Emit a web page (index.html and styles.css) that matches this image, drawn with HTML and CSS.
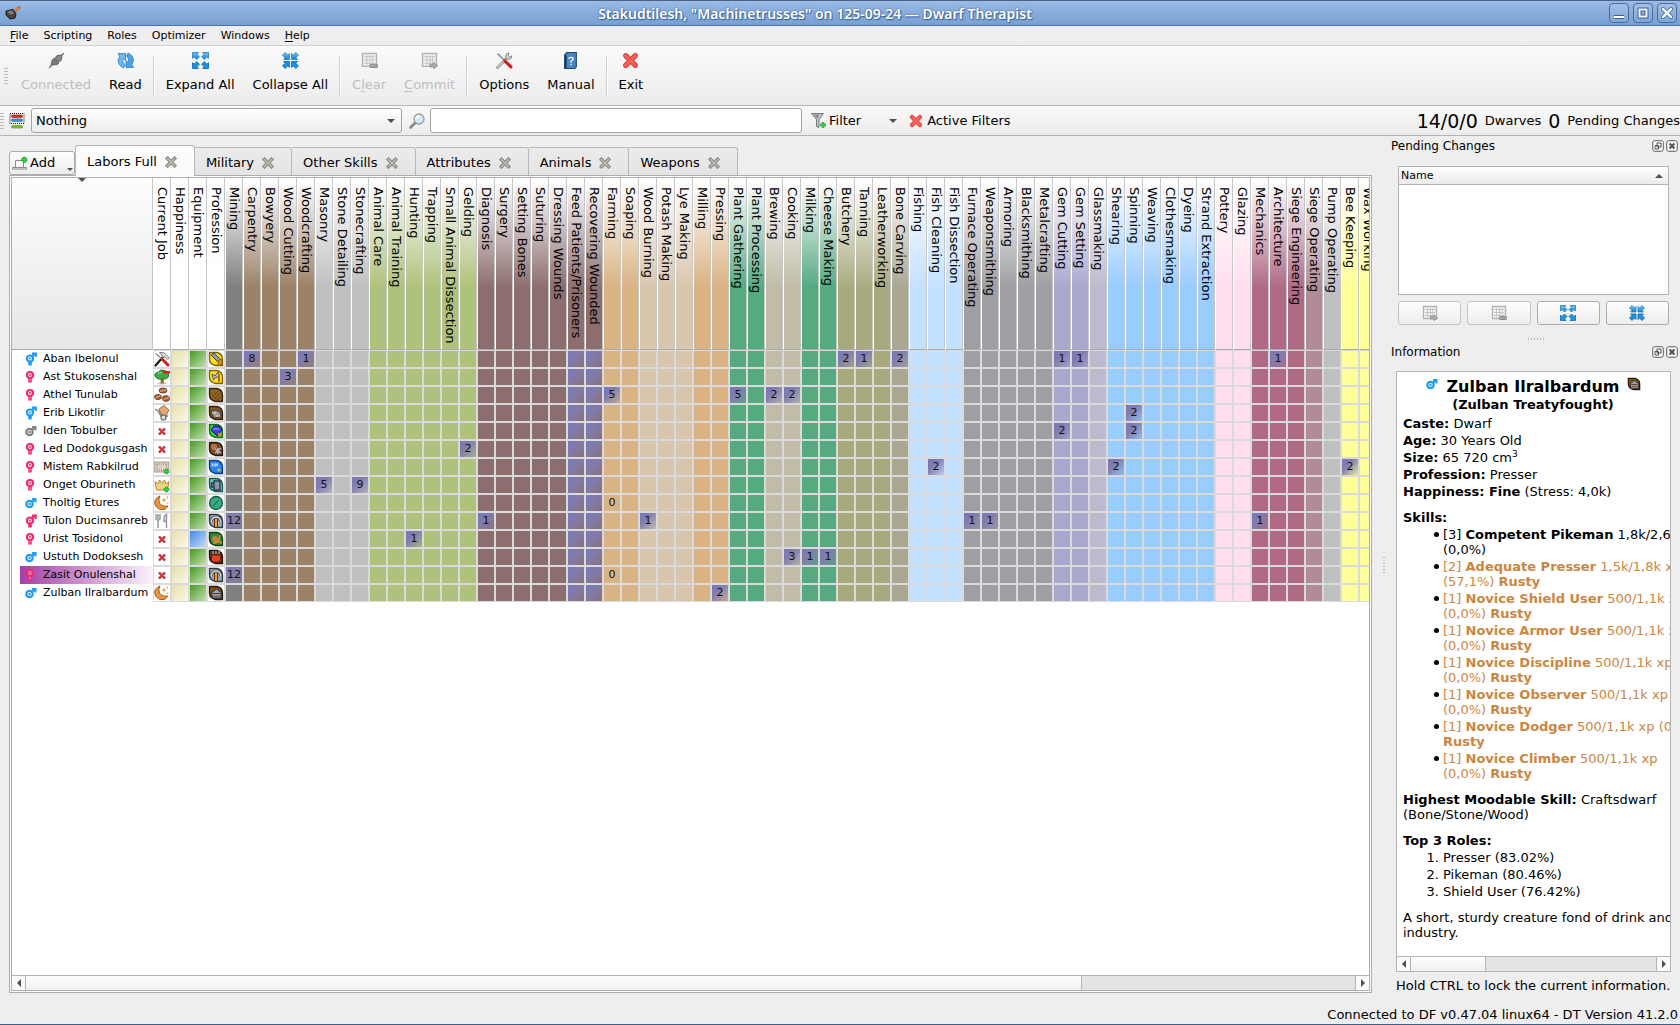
FILE: index.html
```html
<!DOCTYPE html>
<html lang="en">
<head>
<meta charset="utf-8">
<title>Dwarf Therapist</title>
<link rel="stylesheet" href="styles.css">
</head>
<body>
<svg class="defs" aria-hidden="true">
  <defs>
    <linearGradient id="blue" x1="0" y1="0" x2="0" y2="1"><stop offset="0" stop-color="#7cc4f2"/><stop offset="1" stop-color="#0d84d6"/></linearGradient>
    <symbol id="i-hammer" viewBox="0 0 16 14"><path d="M8 7 14 1.500" stroke="#a85c10" stroke-width="2.600" stroke-linecap="round"/><path d="M8 6.500 14 1.500" stroke="#f0a040" stroke-width="1.200"/><path d="M1 5 8 3.500 11 8 10 12 5 13 1 9z" fill="#4a4440" stroke="#1e1a18"/><path d="M2 5.500 7 4.500 9 7.500 5 8.500z" fill="#84807a"/></symbol>
    <symbol id="i-plug" viewBox="0 0 16 16"><path d="M1 15 4 12M12 4l3-3" stroke="#808080" stroke-width="1.500"/><path d="M3 12 4 7.500 6 6 7.500 7.500 9 9 10 10.500 8 12z" fill="#7c7c7c" stroke="#686868"/><path d="M7 5.500 8.500 3.500 12.500 3 13 4 12.500 7.500 10.500 9z" fill="#8c8c8c" stroke="#686868"/></symbol>
    <symbol id="i-read" viewBox="0 0 16 16"><path d="M1 1.500h7v6.500L6 6Q4 9 7.500 12.500L6 15Q-1.500 11 2.500 4z" fill="#6cb8f0" stroke="#2a80c8" stroke-width=".8"/><path d="M15.500 14.500H8.500V8l2 2Q12 7 9 3.500L10.500 1q7.500 4 3.500 11z" fill="#4ca4e4" stroke="#2a80c8" stroke-width=".8"/></symbol>
    <symbol id="i-expand" viewBox="0 0 16 16"><g fill="url(#blue)" stroke="#1f7fc0" stroke-width=".8"><path d="M.5 6V.5H6L4.500 2 7 4.500 4.500 7 2 4.500z"/><path d="M15.500 6V.5H10L11.500 2 9 4.500 11.500 7 14 4.500z"/></g><g fill="#1c94e4" stroke="#0868b0" stroke-width=".8"><path d="M.5 10v5.500H6L4.500 14 7 11.500 4.500 9 2 11.500z"/><path d="M15.500 10v5.500H10l1.500-1.500L9 11.500 11.500 9 14 11.500z"/></g></symbol>
    <symbol id="i-collapse" viewBox="0 0 16 16"><g fill="url(#blue)" stroke="#1f7fc0" stroke-width=".8"><path d="M7 1.500V7H1.500L3 5.500.5 3 3 .5 5.500 3z"/><path d="M9 1.500V7h5.500L13 5.500 15.500 3 13 .5 10.500 3z"/></g><g fill="#1c94e4" stroke="#0868b0" stroke-width=".8"><path d="M7 14.500V9H1.500L3 10.500.5 13 3 15.500 5.500 13z"/><path d="M9 14.500V9h5.500L13 10.500l2.500 2.500L13 15.500 10.500 13z"/></g></symbol>
    <symbol id="i-clear" viewBox="0 0 16 16"><path d="M1.500 1.500h13v12h-13z" fill="#f4f4f4" stroke="#b4b4b4" stroke-width="1.400"/><path d="M3 4.500h10M3 7.500h10M3 10.500h10M5.500 3v9M8.500 3v9M11 3v9" stroke="#c4c4c4"/><rect x="8.500" y="11.500" width="7" height="3" rx="1" fill="#a8a8a8" stroke="#888"/></symbol>
    <symbol id="i-commit" viewBox="0 0 16 16"><path d="M1.500 1.500h13v12h-13z" fill="#f4f4f4" stroke="#b4b4b4" stroke-width="1.400"/><path d="M3 4.500h10M3 7.500h10M3 10.500h10M5.500 3v9M8.500 3v9M11 3v9" stroke="#c4c4c4"/><path d="M8.500 11.500h3.500v-1.500l3.500 3-3.500 2.500V14H8.500z" fill="#b0b0b0" stroke="#888" stroke-width=".8"/></symbol>
    <symbol id="i-tools" viewBox="0 0 16 16"><path d="M1.500 14.500 11 5" stroke="#8c8c8c" stroke-width="2.600" stroke-linecap="round"/><path d="M1.500 14.500 11 5" stroke="#e0e0e0"/><path d="M10 1.500 12.500 1 11.500 3l1.500 1.500 2-1Q15 6.500 12 7 9 7 9 4.500z" fill="#d0d0d0" stroke="#808080" stroke-width=".8"/><path d="M1.500 1.500 8 8" stroke="#909090" stroke-width="1.600"/><path d="M8.500 8.500 14 14" stroke="#d02020" stroke-width="3" stroke-linecap="round"/></symbol>
    <symbol id="j-hammer" viewBox="0 0 16 16"><path d="M1.500 14.500 9 6" stroke="#1c1c1c" stroke-width="2.200" stroke-linecap="round"/><path d="M5.500 1.500Q10 .5 12 3.500L15.500 7 13.500 8.500 11 6 8.500 6.500 8 4z" fill="#d8d8d8" stroke="#707070" stroke-width=".8"/><path d="M1.500 2.500 8 8" stroke="#909090" stroke-width="1.600"/><path d="M8.500 8.500 14 14" stroke="#d82020" stroke-width="3" stroke-linecap="round"/></symbol>
    <symbol id="i-manual" viewBox="0 0 12 16"><path d="M.5 2.500 2.500.5h9V14L10 15.500H.5z" fill="#4a86c4" stroke="#1c4474"/><path d="M1.500 3v12" stroke="#16304e" stroke-width="1.500"/><path d="M4.500 6.500Q4.500 5 6.500 5T8.500 6.500Q8.500 7.500 6.500 8.500V10M6.500 11v1.500" fill="none" stroke="#fff" stroke-width="1.200"/></symbol>
    <symbol id="i-x" viewBox="0 0 14 14"><path d="M3 3 11 11M11 3 3 11" stroke="#d83030" stroke-width="4.200" stroke-linecap="round"/><path d="M3 3 11 11M11 3 3 11" stroke="#ff6058" stroke-width="2.800" stroke-linecap="round"/></symbol>
    <symbol id="i-close" viewBox="0 0 12 12"><path d="M2.500 2.500 9.500 9.500M9.500 2.500 2.500 9.500" stroke="#82827c" stroke-width="3.600" stroke-linecap="square"/><path d="M2.500 2.500 9.500 9.500M9.500 2.500 2.500 9.500" stroke="#b8b8b0" stroke-width="1.800" stroke-linecap="square"/></symbol>
    <symbol id="i-group" viewBox="0 0 16 16"><rect x="1" y=".5" width="14" height="10" fill="none" stroke="#111" stroke-dasharray="1 1"/><rect x="2.500" y="2" width="11" height="2.500" rx="1" fill="#e02c2c" stroke="#a01414" stroke-width=".6"/><rect x="2.500" y="6" width="11" height="2.500" rx="1" fill="#2c9ce0" stroke="#1468a0" stroke-width=".6"/><rect x="2.500" y="12.500" width="11" height="2.500" rx="1" fill="#7cc82c" stroke="#4c8c10" stroke-width=".6"/></symbol>
    <symbol id="i-search" viewBox="0 0 16 16"><path d="M1.500 14.500 6 10" stroke="#888" stroke-width="2.600" stroke-linecap="round"/><circle cx="10" cy="6" r="5" fill="#d6e8f6" stroke="#9a9a9a" stroke-width="1.300"/><path d="M7 6Q7.500 3 10.500 3" fill="none" stroke="#fff" stroke-width="1.500"/></symbol>
    <symbol id="i-plus" viewBox="0 0 8 8"><path d="M4 .8v6.400M.8 4h6.400" stroke="#108c20" stroke-width="3"/><path d="M4 1.200v5.600M1.200 4h5.600" stroke="#38dc48" stroke-width="1.500"/></symbol>
    <symbol id="i-filter" viewBox="0 0 16 16"><path d="M.5.500h12L8 6.500v8l-2.500-1v-7z" fill="#c4c4c8" stroke="#78787c"/><path d="M3 1.500h5L6.500 6z" fill="#86868c"/><use href="#i-plus" x="8.500" y="8.500" width="7" height="7"/></symbol>
    <symbol id="i-add" viewBox="0 0 16 16"><path d="M3.500 5.500h8v7h-8zM.5 12.500h14v1.500H.5z" fill="#f6f6f6" stroke="#8c8c8c"/><use href="#i-plus" x="8.500" y="1" width="7.500" height="7.500"/></symbol>
    <symbol id="i-float" viewBox="0 0 12 12"><rect x=".7" y=".7" width="10.600" height="10.600" rx="2" fill="#f8f8f8" stroke="#606060"/><path d="M5 3h4v4H5zM3 5.500h3.500V9H3z" fill="#fff" stroke="#505050"/></symbol>
    <symbol id="i-dockx" viewBox="0 0 12 12"><rect x=".7" y=".7" width="10.600" height="10.600" rx="2" fill="#f8f8f8" stroke="#606060"/><path d="M3.500 3.500 8.500 8.500M8.500 3.500 3.500 8.500" stroke="#555" stroke-width="2.200"/></symbol>
    <symbol id="s-male" viewBox="0 0 12 14"><path d="M7 6 9.500 3.500M7 3h3.500v3.500" fill="none" stroke="currentColor" stroke-width="2"/><circle cx="4.500" cy="8" r="3.200" fill="#fff" fill-opacity=".6" stroke="currentColor" stroke-width="2.200"/><circle cx="4.500" cy="8" r="1.200" fill="currentColor"/></symbol>
    <symbol id="s-female" viewBox="0 0 12 14"><circle cx="5" cy="5" r="3" fill="#fff" fill-opacity=".5" stroke="currentColor" stroke-width="2.200"/><circle cx="5" cy="5" r="1" fill="currentColor"/><path d="M5 8v4.500" stroke="currentColor" stroke-width="3.600"/><path d="M5 9v2.500" stroke="#fff" stroke-opacity=".5"/></symbol>
    <symbol id="s-both" viewBox="0 0 12 14"><path d="M7 4.500 9.500 2M7 1.500h3.800v3.500" fill="none" stroke="currentColor" stroke-width="2"/><circle cx="5" cy="6.500" r="3" fill="#fff" fill-opacity=".5" stroke="currentColor" stroke-width="2.200"/><circle cx="5" cy="6.500" r="1" fill="currentColor"/><path d="M5 9v4.500" stroke="currentColor" stroke-width="3.600"/></symbol>
    <symbol id="j-tree" viewBox="0 0 16 16"><ellipse cx="8" cy="14.500" rx="5" ry="1" fill="#c8c8c8"/><path d="M7 8h2.500l.5 6.500H6.500z" fill="#a06a28"/><path d="M1 7Q0 4 4 3.500 6-.5 10 1.500 15 2 14.500 7 14 10.500 8.500 10 3 11 1 7z" fill="#48a848" stroke="#227a2c"/><path d="M4 5Q6 2.500 8 4" fill="none" stroke="#90d880"/><rect x="9" y="2" width="7" height="2.500" fill="#d82020"/></symbol>
    <symbol id="j-seeds" viewBox="0 0 16 16"><g fill="#a8623a" stroke="#6c3416" stroke-width=".8"><ellipse cx="9" cy="3.500" rx="4" ry="2.600"/><ellipse cx="4" cy="10" rx="3.500" ry="2.600"/><ellipse cx="12" cy="11.500" rx="3.600" ry="2.900"/></g><path d="M6 4.500Q9 3 12 3M1.500 11Q4 9 6.500 9M9.500 13Q12 11 15 10.500" fill="none" stroke="#eab48c"/></symbol>
    <symbol id="j-barrow" viewBox="0 0 16 16"><path d="M1 4 4 6 7 11h7" fill="none" stroke="#888" stroke-width="1.500"/><path d="m5 4 5-3.500 5 4.500-3 5.500-5-1z" fill="#e0ac74" stroke="#9c6a34"/><circle cx="9.500" cy="12.500" r="2.500" fill="#ddd" stroke="#666" stroke-width="1.200"/></symbol>
    <symbol id="j-idle" viewBox="0 0 16 16"><path d="M5 5.500 11 11.500M11 5.500 5 11.500" stroke="#c01c28" stroke-width="2.400"/><path d="M5.500 6 10.500 11M10.500 6 5.500 11" stroke="#e86468" stroke-width=".7"/></symbol>
    <symbol id="j-store" viewBox="0 0 16 16"><rect x=".7" y="3" width="14" height="10" fill="#ded2c4" stroke="#a89c8c"/><rect x="3" y="5" width="9.500" height="6" fill="none" stroke="#8c8478" stroke-dasharray="1 1"/><use href="#i-plus" x="9" y="9" width="7" height="7"/></symbol>
    <symbol id="j-crown" viewBox="0 0 16 16"><path d="M1 4.500 4 7 5.500 3 8 6.500 10.500 3 12 7l3-2.500-1.500 8.500h-11z" fill="#f0d484" stroke="#b08830"/><use href="#i-plus" x="9" y="9" width="7" height="7"/></symbol>
    <symbol id="j-moon" viewBox="0 0 16 16"><path d="M6 1Q-.5 3.500 1 9.500 3.500 15.500 10 14.500 12.500 13.500 14 11 8 12 5.500 8 4 4.500 6 1z" fill="#e89440" stroke="#a85c14"/><path d="M10 3v4M8 5h4M13.500 1.500v2M12.500 8h2" stroke="#e89440"/></symbol>
    <symbol id="j-eat" viewBox="0 0 16 16"><path d="M2 1v5l2 1.500V15M6 1v5L4 7.500M4 1v5" fill="none" stroke="#989898" stroke-width="1.500"/><path d="M12.500 15V1Q9.500 3 10 8.500h2.500" fill="#ddd" stroke="#989898" stroke-width="1.400"/></symbol>
    <symbol id="leaf" viewBox="0 0 16 16"><path d="M1.500 1.500H9Q14.500 3 14.500 8v6.500H7.500Q1.500 13 1.500 8z" stroke-width="1.400"/></symbol>
    <symbol id="p-saw" viewBox="0 0 16 16"><use href="#leaf" fill="#ffe018" stroke="#806000"/><path d="m3 4 3-2 7 7-2 3z" fill="#8c9cb4" stroke="#3c4858"/><path d="m10 10 4-2v6h-4z" fill="#d88c18" stroke="#7c4c08" stroke-dasharray="1 1"/></symbol>
    <symbol id="p-axe" viewBox="0 0 16 16"><use href="#leaf" fill="#ffe018" stroke="#806000"/><path d="M4 5 7 7l3-4 1.500 5L8 8 5.500 11z" fill="#b4c4d4" stroke="#4c5c6c"/><path d="M11 5v8" stroke="#b86814" stroke-width="2"/></symbol>
    <symbol id="p-farm" viewBox="0 0 16 16"><use href="#leaf" fill="#906020" stroke="#34200a"/><path d="m4 10 6-6M6 12l6-6M9 13l4-4" stroke="#60400e" stroke-width=".8"/></symbol>
    <symbol id="p-stone" viewBox="0 0 16 16"><use href="#leaf" fill="#805818" stroke="#34200a"/><path d="m3 6 5-1 5 3-1 4-6 1z" fill="#949ca8" stroke="#343c48"/><path d="M4 8h4M8 11h4" stroke="#ffe050"/></symbol>
    <symbol id="p-gem" viewBox="0 0 16 16"><use href="#leaf" fill="#38d838" stroke="#146814"/><path d="m3 7 3-4h5l3 4-5 6z" fill="#4040e8" stroke="#14147c"/><path d="M5 6h6" stroke="#a0a0ff"/><path d="M10 10h3v3h-3z" fill="#d88818"/></symbol>
    <symbol id="p-geld" viewBox="0 0 16 16"><use href="#leaf" fill="#744824" stroke="#2c180a"/><circle cx="6" cy="6" r="3" fill="#b87040"/><path d="m7 8 6 4M7 12l6-5M10 7v6" stroke="#b8bcc4" stroke-width="1.400"/></symbol>
    <symbol id="p-fish" viewBox="0 0 16 16"><use href="#leaf" fill="#2c84f0" stroke="#0c3c84"/><path d="M4 4v4M4 6h6M7 4v4M9 4v3" stroke="#c8e4ff"/><circle cx="11" cy="11" r="1.500" fill="#d0c040"/></symbol>
    <symbol id="p-mug" viewBox="0 0 16 16"><use href="#leaf" fill="#64c8c4" stroke="#145854"/><path d="M6 4h6v9H6zM6 6H3.500v4H6" fill="#8c98a8" stroke="#2c3848" stroke-width="1.400"/></symbol>
    <symbol id="p-disc" viewBox="0 0 16 16"><circle cx="8" cy="8" r="6.500" fill="#38a884" stroke="#125844" stroke-width="1.300"/><path d="m5 11 6-6" stroke="#1c7c60" stroke-width="1.500"/></symbol>
    <symbol id="p-pick" viewBox="0 0 16 16"><use href="#leaf" fill="#9cacb8" stroke="#2c3840"/><path d="M3 9Q4 4 8 4t5 5" fill="none" stroke="#3c4850" stroke-width="3"/><path d="M3 9Q4 4 8 4t5 5" fill="none" stroke="#d4dce4" stroke-width="1.500"/><path d="M8 6v8" stroke="#5c3000" stroke-width="4"/><path d="M8 6v8" stroke="#f89c28" stroke-width="2"/></symbol>
    <symbol id="p-hunt" viewBox="0 0 16 16"><use href="#leaf" fill="#2c8c2c" stroke="#103c10"/><circle cx="7" cy="8" r="3" fill="#c88048"/><path d="M5 12Q11 13 12 4M10 10l4 2" fill="none" stroke="#e88c20" stroke-width="1.500"/></symbol>
    <symbol id="p-cook" viewBox="0 0 16 16"><use href="#leaf" fill="#54341c" stroke="#241004"/><path d="M3.500 6h9v5l-2 2H5l-1.500-2z" fill="#e04420" stroke="#701c08"/><path d="M5 2v3M8 2v3M11 2v3" stroke="#ccc"/></symbol>
    <symbol id="p-press" viewBox="0 0 16 16"><use href="#leaf" fill="#80500c" stroke="#281804"/><path d="M4 7.500 8.500 4 13 7.500V13H4z" fill="#98a8c8" stroke="#282c3c"/><path d="M5 8.500h7M5 11h7" stroke="#3c3430"/><path d="M5 10h7" stroke="#e08c30"/></symbol>
  </defs>
</svg>

<header class="titlebar">
  <svg class="app-icon"><use href="#i-hammer"/></svg>
  <h1>Stakudtilesh, "Machinetrusses" on 125-09-24 — Dwarf Therapist</h1>
  <div class="window-buttons">
    <button aria-label="Minimize"><svg viewBox="0 0 18 18"><path d="M4 13h10" stroke="#3a6296" stroke-width="4"/><path d="M4 13h10" stroke="#fff" stroke-width="2"/></svg></button>
    <button aria-label="Maximize"><svg viewBox="0 0 18 18"><path d="M5.500 5.500h7v7h-7z" fill="none" stroke="#3a6296" stroke-width="4"/><path d="M5.500 5.500h7v7h-7z" fill="none" stroke="#eef4fc" stroke-width="2"/></svg></button>
    <button aria-label="Close"><svg viewBox="0 0 18 18"><path d="m5 5 8 8M13 5l-8 8" stroke="#3a6296" stroke-width="4" stroke-linecap="round"/><path d="m5 5 8 8M13 5l-8 8" stroke="#eef4fc" stroke-width="2.500" stroke-linecap="round"/></svg></button>
  </div>
</header>

<nav class="menubar">
  <button><u>F</u>ile</button><button>Scripting</button><button>Roles</button><button>Optimizer</button><button>Windows</button><button><u>H</u>elp</button>
</nav>

<div class="toolbar">
  <span class="grip"></span>
  <button disabled><svg><use href="#i-plug"/></svg>Connected</button>
  <button><svg><use href="#i-read"/></svg>Read</button>
  <span class="rule"></span>
  <button><svg><use href="#i-expand"/></svg>Expand All</button>
  <button><svg><use href="#i-collapse"/></svg>Collapse All</button>
  <span class="rule"></span>
  <button disabled><svg><use href="#i-clear"/></svg><span>C<u>l</u>ear</span></button>
  <button disabled><svg><use href="#i-commit"/></svg><span><u>C</u>ommit</span></button>
  <span class="rule"></span>
  <button><svg><use href="#i-tools"/></svg>Options</button>
  <button><svg><use href="#i-manual"/></svg>Manual</button>
  <span class="rule"></span>
  <button><svg><use href="#i-x"/></svg>Exit</button>
</div>

<div class="filterbar">
  <span class="grip"></span>
  <svg class="icon"><use href="#i-group"/></svg>
  <label class="combo"><select aria-label="Group by"><option>Nothing</option></select></label>
  <svg class="icon"><use href="#i-search"/></svg>
  <input class="search" type="text" aria-label="Search">
  <button class="filter"><svg class="icon"><use href="#i-filter"/></svg>Filter<i class="down"></i></button>
  <button class="active-filters"><svg class="icon"><use href="#i-x"/></svg>Active Filters</button>
  <p class="counts"><b>14/0/0</b><span>Dwarves</span><b>0</b><span>Pending Changes</span></p>
</div>

<main class="workspace">
  <section class="views">
    <div class="tabs">
      <button class="add"><svg class="icon"><use href="#i-add"/></svg>Add<i class="down"></i></button>
      <div class="tab current"><button>Labors Full</button><button class="close" aria-label="Close Labors Full"><svg><use href="#i-close"/></svg></button></div>
      <div class="tab"><button>Military</button><button class="close" aria-label="Close Military"><svg><use href="#i-close"/></svg></button></div>
      <div class="tab"><button>Other Skills</button><button class="close" aria-label="Close Other Skills"><svg><use href="#i-close"/></svg></button></div>
      <div class="tab"><button>Attributes</button><button class="close" aria-label="Close Attributes"><svg><use href="#i-close"/></svg></button></div>
      <div class="tab"><button>Animals</button><button class="close" aria-label="Close Animals"><svg><use href="#i-close"/></svg></button></div>
      <div class="tab"><button>Weapons</button><button class="close" aria-label="Close Weapons"><svg><use href="#i-close"/></svg></button></div>
    </div>
    <div class="pane">
      <div class="grid-view"><table class="grid" id="grid"></table></div>
      <div class="scrollbar wide"><button class="left" aria-label="Scroll left"></button><span class="thumb"></span><span class="track"></span><button class="right" aria-label="Scroll right"></button></div>
    </div>
  </section>

  <span class="splitter"></span>

  <aside class="docks">
    <section class="dock">
      <div class="dock-title"><h2>Pending Changes</h2><button aria-label="Float"><svg><use href="#i-float"/></svg></button><button aria-label="Close"><svg><use href="#i-dockx"/></svg></button></div>
      <div class="pending">
        <div class="list"><div class="list-head">Name<i class="up"></i></div></div>
        <div class="pending-buttons">
          <button disabled aria-label="Commit"><svg><use href="#i-commit"/></svg></button>
          <button disabled aria-label="Clear"><svg><use href="#i-clear"/></svg></button>
          <button aria-label="Expand all"><svg><use href="#i-expand"/></svg></button>
          <button aria-label="Collapse all"><svg><use href="#i-collapse"/></svg></button>
        </div>
      </div>
    </section>
    <span class="splitter-row"></span>
    <section class="dock info">
      <div class="dock-title"><h2>Information</h2><button aria-label="Float"><svg><use href="#i-float"/></svg></button><button aria-label="Close"><svg><use href="#i-dockx"/></svg></button></div>
      <div class="info-frame">
        <div class="info-text">
          <h3><svg class="male"><use href="#s-male"/></svg>Zulban Ilralbardum<svg><use href="#p-press"/></svg></h3>
          <h4>(Zulban Treatyfought)</h4>
          <p><b>Caste:</b> Dwarf</p>
          <p><b>Age:</b> 30 Years Old</p>
          <p><b>Size:</b> 65 720 cm<sup>3</sup></p>
          <p><b>Profession:</b> Presser</p>
          <p><b>Happiness: Fine</b> (Stress: 4,0k)</p>
          <p class="head"><b>Skills:</b></p>
          <ul>
            <li>[3] <b>Competent Pikeman</b> 1,8k/2,6k xp<br>(0,0%)</li>
            <li><span>[2] <b>Adequate Presser</b> 1,5k/1,8k xp<br>(57,1%) <b>Rusty</b></span></li>
            <li><span>[1] <b>Novice Shield User</b> 500/1,1k xp<br>(0,0%) <b>Rusty</b></span></li>
            <li><span>[1] <b>Novice Armor User</b> 500/1,1k xp<br>(0,0%) <b>Rusty</b></span></li>
            <li><span>[1] <b>Novice Discipline</b> 500/1,1k xp<br>(0,0%) <b>Rusty</b></span></li>
            <li><span>[1] <b>Novice Observer</b> 500/1,1k xp<br>(0,0%) <b>Rusty</b></span></li>
            <li><span>[1] <b>Novice Dodger</b> 500/1,1k xp (0,0%)<br><b>Rusty</b></span></li>
            <li><span>[1] <b>Novice Climber</b> 500/1,1k xp<br>(0,0%) <b>Rusty</b></span></li>
          </ul>
          <p class="head"><b>Highest Moodable Skill:</b> Craftsdwarf<br>(Bone/Stone/Wood)</p>
          <p class="head"><b>Top 3 Roles:</b></p>
          <ol><li>Presser (83.02%)</li><li>Pikeman (80.46%)</li><li>Shield User (76.42%)</li></ol>
          <p class="head">A short, sturdy creature fond of drink and<br>industry.</p>
        </div>
        <div class="scrollbar narrow"><button class="left" aria-label="Scroll left"></button><span class="thumb"></span><span class="track"></span><button class="right" aria-label="Scroll right"></button></div>
      </div>
      <p class="hint">Hold CTRL to lock the current information.</p>
    </section>
  </aside>
</main>

<footer class="statusbar">Connected to DF v0.47.04 linux64 - DT Version 41.2.0</footer>
<script src="grid.js"></script>
</body>
</html>
```
FILE: grid.js
```js
// Skill columns, grouped by the labor colour they share.
const groups = [
  ['mining', ['Mining']],
  ['wood', ['Carpentry', 'Bowyery', 'Wood Cutting', 'Woodcrafting']],
  ['stone', ['Masonry', 'Stone Detailing', 'Stonecrafting']],
  ['animal', ['Animal Care', 'Animal Training', 'Hunting', 'Trapping', 'Small Animal Dissection', 'Gelding']],
  ['medical', ['Diagnosis', 'Surgery', 'Setting Bones', 'Suturing', 'Dressing Wounds']],
  ['medical on', ['Feed Patients/Prisoners', 'Recovering Wounded']],
  ['farm', ['Farming', 'Soaping']],
  ['burn', ['Wood Burning', 'Potash Making', 'Lye Making']],
  ['farm', ['Milling', 'Pressing']],
  ['plant', ['Plant Gathering', 'Plant Processing']],
  ['food', ['Brewing', 'Cooking']],
  ['plant', ['Milking', 'Cheese Making']],
  ['leather', ['Butchery', 'Tanning', 'Leatherworking']],
  ['bone', ['Bone Carving']],
  ['fish', ['Fishing', 'Fish Cleaning', 'Fish Dissection']],
  ['metal', ['Furnace Operating', 'Weaponsmithing', 'Armoring', 'Blacksmithing', 'Metalcrafting']],
  ['gem', ['Gem Cutting', 'Gem Setting']],
  ['glass', ['Glassmaking']],
  ['cloth', ['Shearing', 'Spinning', 'Weaving', 'Clothesmaking', 'Dyeing', 'Strand Extraction']],
  ['clay', ['Pottery', 'Glazing']],
  ['engine', ['Mechanics', 'Architecture', 'Siege Engineering']],
  ['siege', ['Siege Operating']],
  ['stone', ['Pump Operating']],
  ['bee', ['Bee Keeping', 'Wax Working']]
];

// name, sex icon, colour, job icon, profession icon, skill levels
const dwarves = [
  ['Aban Ibelonul', 'both', 'male', 'j-hammer', 'saw', {Carpentry: 8, Woodcrafting: 1, Butchery: 2, Tanning: 1, 'Bone Carving': 2, 'Gem Cutting': 1, 'Gem Setting': 1, Architecture: 1}],
  ['Ast Stukosenshal', 'female', 'female', 'j-tree', 'axe', {'Wood Cutting': 3}],
  ['Athel Tunulab', 'female', 'female', 'j-seeds', 'farm', {Farming: 5, 'Plant Gathering': 5, Brewing: 2, Cooking: 2}],
  ['Erib Likotlir', 'both', 'male', 'j-barrow', 'stone', {Spinning: 2}],
  ['Iden Tobulber', 'male', 'none', 'j-idle', 'gem', {'Gem Cutting': 2, Spinning: 2}],
  ['Led Dodokgusgash', 'female', 'female', 'j-idle', 'geld', {Gelding: 2}],
  ['Mistem Rabkilrud', 'female', 'female', 'j-store', 'fish', {'Fish Cleaning': 2, Shearing: 2, 'Bee Keeping': 2}],
  ['Onget Oburineth', 'female', 'female', 'j-crown', 'mug', {Masonry: 5, Stonecrafting: 9}],
  ['Tholtig Etures', 'male', 'male', 'j-moon', 'disc', {Farming: 0}],
  ['Tulon Ducimsanreb', 'both', 'female', 'j-eat', 'pick', {Mining: 12, Diagnosis: 1, 'Wood Burning': 1, 'Furnace Operating': 1, Weaponsmithing: 1, Mechanics: 1}],
  ['Urist Tosidonol', 'female', 'female', 'j-idle', 'hunt', {Hunting: 1}],
  ['Ustuth Dodoksesh', 'male', 'male', 'j-idle', 'cook', {Cooking: 3, Milking: 1, 'Cheese Making': 1}],
  ['Zasit Onulenshal', 'female', 'female', 'j-idle', 'pick', {Mining: 12, Farming: 0}],
  ['Zulban Ilralbardum', 'male', 'male', 'j-moon', 'press', {Pressing: 2}]
];

const icon = (id, cls = '') => `<svg class="${cls}"><use href="#${id}"/></svg>`;
const columns = groups.flatMap(([group, names]) => names.map(name => [group, name]));

const head = ['Current Job', 'Happiness', 'Equipment', 'Profession'].map(name => ['plain', name])
  .concat(columns)
  .map(([group, name]) => `<th scope="col" class="${group}"><span>${name}</span></th>`).join('');

const rows = dwarves.map(([name, sex, tone, job, prof, skills]) => {
  const cells = columns.map(([group, skill]) => {
    const level = skills[skill];
    const on = level > 0 ? ' on' : '';
    return `<td class="${group}${on}"><span>${level ?? ''}</span></td>`;
  }).join('');
  const selected = name === 'Zasit Onulenshal' ? ' selected' : '';
  const armed = name === 'Urist Tosidonol' ? 'uniform' : 'equipped';
  return `<tr><th scope="row"><span class="name${selected}">${icon('s-' + sex, tone)}${name}</span></th>
    <td><span class="white">${icon(job)}</span></td><td><span class="happy"></span></td>
    <td><span class="${armed}"></span></td><td><span class="white">${icon('p-' + prof)}</span></td>${cells}</tr>`;
}).join('');

document.getElementById('grid').innerHTML =
  `<thead><tr><th class="corner" aria-label="Name"><i class="down"></i></th>${head}</tr></thead><tbody>${rows}</tbody>`;
```
FILE: styles.css
```css
* { box-sizing: border-box; }

body {
  margin: 0;
  min-height: 100vh;
  display: flex;
  flex-direction: column;
  background: #eeeeee;
  border-bottom: 1px solid #3e5f8a;
  color: #000;
  font: 13px/16px "DejaVu Sans", sans-serif;
}

h1, h2, h3, h4, p, ul, ol { margin: 0; padding: 0; }
button, input, select { font: inherit; color: inherit; }
button { padding: 0; border: 0; background: none; }
svg { display: block; flex: none; }
.defs { position: absolute; width: 0; height: 0; }
.icon { width: 16px; height: 16px; }

.down, .up { border: 4px solid transparent; }
.down { border-top-color: #505050; border-bottom: 0; }
.up { border-bottom-color: #505050; border-top: 0; }

/* Title bar */
.titlebar {
  display: flex;
  align-items: center;
  height: 26px;
  padding: 0 3px 0 5px;
  border-top: 1px solid #4a6488;
  border-bottom: 1px solid #4a72a8;
  background: linear-gradient(#9cbae4, #8aaedc 45%, #78a0d0);
}
.app-icon { width: 16px; height: 14px; }
.titlebar h1 {
  flex: 1;
  padding-top: 2px;
  text-align: center;
  color: #fff;
  font: 600 14px/20px "Noto Sans", sans-serif;
  text-shadow: 0 0 2px #2c548c, 1px 1px 1px #3c649c;
}
.window-buttons { display: flex; gap: 4px; }
.window-buttons button {
  width: 20px;
  height: 20px;
  border: 1px solid #466c9e;
  border-radius: 4px;
  background: linear-gradient(#a4c0e6, #80a6d6);
}
.window-buttons svg { width: 18px; height: 18px; }

/* Menu */
.menubar {
  display: flex;
  gap: 15px;
  height: 20px;
  padding: 0 10px;
  border-bottom: 1px solid #d0d0d0;
  font-size: 11px;
}
.menubar u, .toolbar u { text-underline-offset: 2px; }

/* Toolbars */
.toolbar {
  display: flex;
  height: 60px;
  padding: 0 4px;
  border-bottom: 1px solid #b4b4b4;
  background: linear-gradient(#fafafa, #ececec);
}
.grip {
  width: 4px;
  height: 18px;
  align-self: center;
  background: radial-gradient(circle, #b8b8b8 1px, transparent 1px) 0 0 / 2px 3px;
}
.toolbar button {
  display: flex;
  flex-direction: column;
  align-items: center;
  gap: 8px;
  padding: 6px 9px 0;
}
.toolbar .grip + button { margin-left: 4px; }
.toolbar svg { width: 17px; height: 17px; }
.toolbar button:disabled { color: #bebebe; }
.rule {
  width: 2px;
  margin: 10px 2px 9px;
  border-left: 1px solid #cfcfcf;
  border-right: 1px solid #fff;
}

.filterbar {
  display: flex;
  align-items: center;
  height: 30px;
  border-bottom: 1px solid #b4b4b4;
  background: linear-gradient(#fafafa, #ececec);
}
.filterbar .grip { margin-right: 5px; }
.combo { position: relative; flex: 0 1 371px; margin: 0 7px 0 6px; }
.combo::after {
  content: "";
  position: absolute;
  right: 7px;
  top: 11px;
  border: 4px solid transparent;
  border-top-color: #505050;
  border-bottom: 0;
  pointer-events: none;
}
.combo select, .search {
  display: block;
  height: 25px;
  border: 1px solid #a4a4a4;
  border-radius: 3px;
}
.combo select {
  width: 100%;
  padding: 0 4px;
  appearance: none;
  background: linear-gradient(#fefefe, #ececec);
}
.search { flex: 0 1 372px; min-width: 0; margin: 0 9px 0 5px; background: #fff; }
.filter, .active-filters { display: flex; align-items: center; gap: 2px; }
.filter { margin-right: 12px; }
.filter .down { margin-left: 26px; }
.active-filters { gap: 4px; }
.active-filters .icon { width: 14px; height: 14px; }
.counts { display: flex; align-items: center; gap: 7px; margin-left: auto; }
.counts b { font-size: 19px; font-weight: 400; }

/* Workspace */
.workspace { flex: 1; display: flex; min-height: 0; }
.views { flex: 1; min-width: 0; display: flex; flex-direction: column; padding: 9px 0 1px 9px; }
.tabs { display: flex; align-items: flex-end; height: 30px; }
.add {
  display: flex;
  align-items: center;
  gap: 2px;
  width: 66px;
  height: 24px;
  padding-left: 2px;
  border: 1px solid #acacac;
  border-radius: 3px;
  background: linear-gradient(#fefefe, #ececec);
}
.add .down { align-self: flex-end; margin: 0 0 3px 10px; border-width: 3px 3px 0; }
.tab {
  display: flex;
  align-items: center;
  gap: 8px;
  height: 28px;
  padding: 2px 17px 0 11px;
  border: 1px solid #b8b8b8;
  border-left-width: 0;
  border-bottom: 0;
  border-radius: 0 3px 0 0;
  background: linear-gradient(#ebebeb, #e4e4e4);
}
.tab.current {
  height: 31px;
  margin-bottom: -1px;
  border-left-width: 1px;
  border-radius: 3px 3px 0 0;
  background: #fcfcfc;
  z-index: 1;
}
.close svg { width: 12px; height: 12px; }

.pane {
  flex: 1;
  display: flex;
  flex-direction: column;
  border: 3px double #adadad;
  background: #fff;
}
.grid-view { flex: 1; overflow: hidden; }
.grid { border-collapse: separate; border-spacing: 0; line-height: 16px; }
.grid th, .grid td { padding: 0; font-weight: 400; }

.grid thead th {
  height: 172px;
  padding-top: 9px;
  vertical-align: top;
  border: solid #c6c6c6;
  border-width: 0 1px 1px 0;
  border-left: 1px solid #fff;
  border-bottom-color: #aaaaaa;
  background: linear-gradient(#fcfcfc 3%, var(--c) 64%);
}
.grid thead span { display: block; width: 16px; writing-mode: vertical-rl; white-space: nowrap; }
.grid thead .corner { padding: 0; border-left: 0; background: linear-gradient(#fdfdfd, #e6e6e6); }
.corner .down { display: block; width: 8px; margin-left: 66px; }

.grid td { padding: 1px; background: #dadada; }
.grid td span {
  display: block;
  width: 16px;
  height: 16px;
  background: var(--c);
  text-align: center;
  font-size: 11px;
  color: #111;
}
.grid td.on span { background: linear-gradient(135deg, #7878b8, #807cae 35%, var(--c) 115%); }
.grid td svg { width: 16px; height: 16px; }
.grid td .white { background: #fff; }
.grid td .happy { background: linear-gradient(135deg, #e6dfaa, #fbf9e8); }
.grid td .equipped { background: linear-gradient(135deg, #469a20, #c4dfb4); }
.grid td .uniform { background: linear-gradient(135deg, #468ae8, #c4daf8); }

.name {
  display: flex;
  align-items: center;
  gap: 6px;
  width: 133px;
  height: 18px;
  margin-left: 8px;
  padding-left: 5px;
  font-size: 11px;
  white-space: nowrap;
}
.name.selected { background: linear-gradient(90deg, #a540a5, #faf2fa); }
.name svg { width: 12px; height: 14px; }
.male { color: #1e9cf4; }
.female { color: #f4286c; }
.none { color: #808080; }

.plain { --c: #ffffff; }
.mining { --c: #808080; }
.wood { --c: #9c8268; }
.stone { --c: #c0c0c0; }
.animal { --c: #afc27c; }
.medical { --c: #8c6e6e; }
.farm { --c: #dab384; }
.burn { --c: #d8c6ae; }
.plant { --c: #55aa80; }
.food { --c: #c0bca8; }
.leather { --c: #a8aa7e; }
.bone { --c: #a9a893; }
.fish { --c: #c4e1ff; }
.metal { --c: #9f9fa3; }
.gem { --c: #aaa8cf; }
.glass { --c: #bcbacc; }
.cloth { --c: #99ccff; }
.clay { --c: #ffdfee; }
.engine { --c: #b06a85; }
.siege { --c: #b08c99; }
.bee { --c: #ffff99; }

/* Scroll bars */
.scrollbar { display: flex; height: 15px; border-top: 1px solid #b4b4b4; background: #e4e4e4; }
.scrollbar button { display: flex; align-items: center; justify-content: center; width: 14px; background: #fafafa; }
.scrollbar button::before { content: ""; border: 4px solid transparent; }
.scrollbar .left { border-right: 1px solid #b4b4b4; }
.scrollbar .left::before { border-right-color: #505050; border-left: 0; }
.scrollbar .right { border-left: 1px solid #b4b4b4; }
.scrollbar .right::before { border-left-color: #505050; border-right: 0; }
.thumb { border-right: 1px solid #b4b4b4; background: linear-gradient(#fefefe, #f0f0f0); }
.wide .thumb { flex: 1056; }
.wide .track { flex: 273; }
.narrow .thumb { flex: 74; }
.narrow .track { flex: 171; }

/* Docks */
.splitter {
  width: 2px;
  height: 18px;
  margin: 0 6px 0 11px;
  align-self: center;
  background: radial-gradient(circle, #b8b8b8 1px, transparent 1px) 0 0 / 2px 3px;
}
.docks { width: 289px; flex: none; display: flex; flex-direction: column; }
.dock-title { display: flex; align-items: center; gap: 2px; height: 20px; padding-right: 2px; }
.dock-title h2 { flex: 1; font-size: 12px; font-weight: 400; }
.dock-title svg { width: 12px; height: 12px; }
.pending { padding: 10px 11px 0 7px; }
.list { height: 129px; border: 1px solid #b4b4b4; background: #fff; }
.list-head {
  display: flex;
  align-items: center;
  justify-content: space-between;
  height: 18px;
  padding: 0 5px 0 2px;
  border-bottom: 1px solid #b4b4b4;
  background: linear-gradient(#fefefe, #ebebeb);
  font-size: 11px;
}
.pending-buttons { display: flex; gap: 6px; padding-top: 6px; }
.pending-buttons button {
  flex: 1;
  display: flex;
  align-items: center;
  justify-content: center;
  height: 24px;
  border: 1px solid #acacac;
  border-radius: 3px;
  background: linear-gradient(#fefefe, #ededed);
}
.pending-buttons button:disabled { border-color: #c4c4c4; }
.pending-buttons svg { width: 16px; height: 16px; }
.splitter-row {
  width: 18px;
  height: 2px;
  margin: 13px auto 2px 136px;
  background: radial-gradient(circle, #b8b8b8 1px, transparent 1px) 0 0 / 3px 2px;
}
.info { flex: 1; display: flex; flex-direction: column; }
.info-frame {
  flex: 1;
  display: flex;
  flex-direction: column;
  margin: 9px 9px 0 5px;
  border: 1px solid #b4b4b4;
  background: #fff;
}
.info-text { flex: 1; overflow: hidden; padding: 5px 0 0 6px; white-space: nowrap; line-height: 15px; }
.info-text p, .info-text li { margin-bottom: 2px; }
.info-text h3 { display: flex; justify-content: center; gap: 8px; padding-right: 7px; font-size: 16px; line-height: 20px; }
.info-text h3 svg { width: 14px; height: 14px; }
.info-text h4 { margin-bottom: 4px; padding-right: 7px; text-align: center; font-size: 13px; line-height: 15px; }
.info-text .head { margin-top: 11px; }
.info-text ul, .info-text ol { padding-left: 40px; }
.info-text ul { list-style: none; }
.info-text ul li::before {
  content: "";
  float: left;
  width: 5px;
  height: 5px;
  margin: 5px 0 0 -9px;
  border-radius: 50%;
  background: #000;
}
.info-text li span { color: #cd853f; }
.info-text sup { font-size: 9px; line-height: 0; }
.hint { padding: 6px 0 0 5px; line-height: 16px; }

.statusbar { padding: 12px 2px 1px; text-align: right; line-height: 17px; }
```
